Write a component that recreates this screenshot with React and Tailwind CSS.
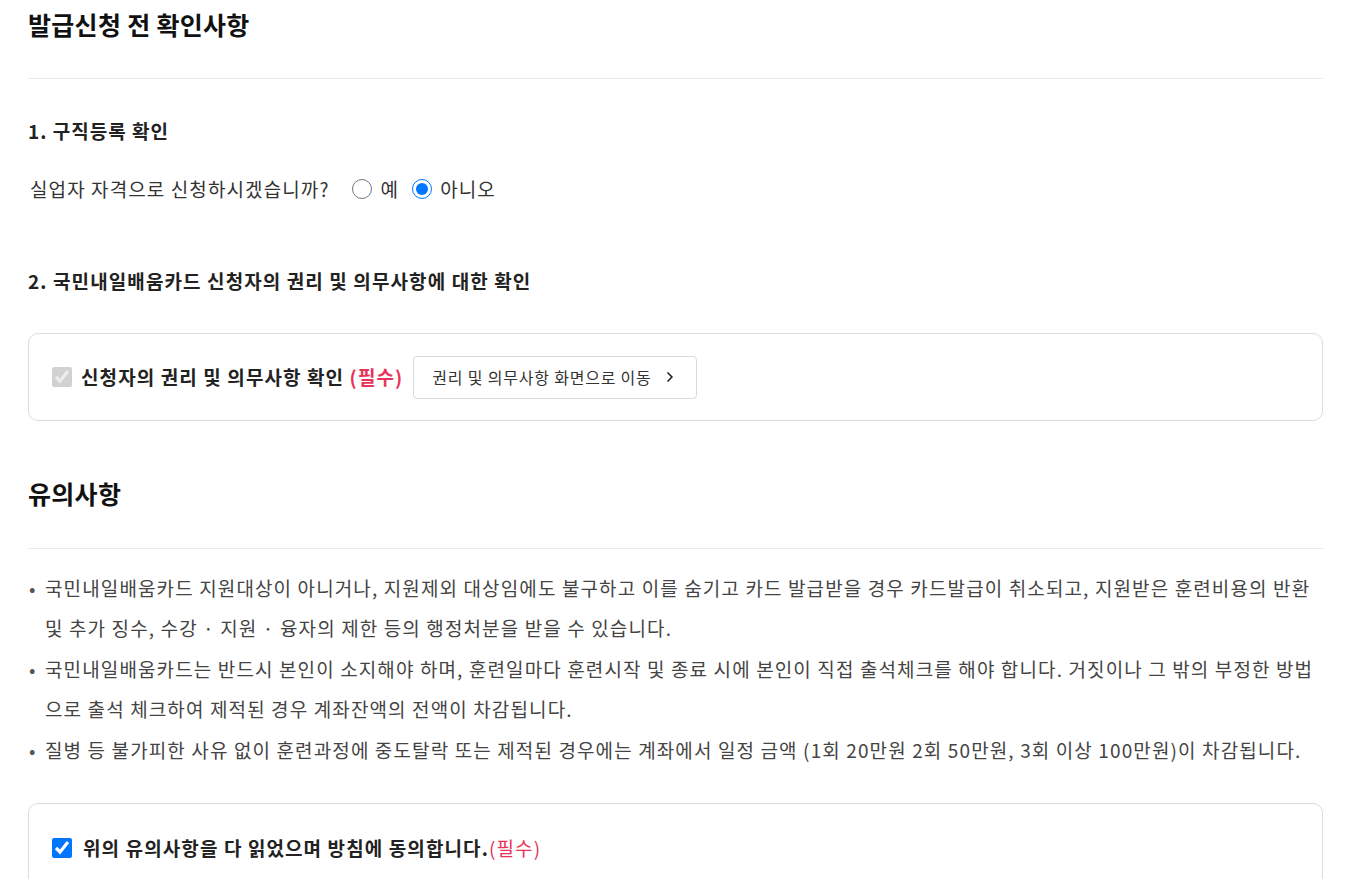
import React from "react";
import { ChevronRight } from "lucide-react";

const notices = [
  "국민내일배움카드 지원대상이 아니거나, 지원제외 대상임에도 불구하고 이를 숨기고 카드 발급받을 경우 카드발급이 취소되고, 지원받은 훈련비용의 반환 및 추가 징수, 수강 · 지원 · 융자의 제한 등의 행정처분을 받을 수 있습니다.",
  "국민내일배움카드는 반드시 본인이 소지해야 하며, 훈련일마다 훈련시작 및 종료 시에 본인이 직접 출석체크를 해야 합니다. 거짓이나 그 밖의 부정한 방법으로 출석 체크하여 제적된 경우 계좌잔액의 전액이 차감됩니다.",
  "질병 등 불가피한 사유 없이 훈련과정에 중도탈락 또는 제적된 경우에는 계좌에서 일정 금액 (1회 20만원 2회 50만원, 3회 이상 100만원)이 차감됩니다.",
];

const App = () => {
  return (
    <div
      className="min-h-screen bg-white text-[#333] pl-[28px] pr-[24px]"
      style={{ fontFamily: '"Noto Sans CJK KR", "Noto Sans", sans-serif' }}
    >
      <h1 className="text-[25px] tracking-[0.3px] leading-[48px] font-bold text-[#111]">
        발급신청 전 확인사항
      </h1>
      <div className="mt-[30px] border-t border-[#ebebeb]"></div>

      {/* 1. 구직등록 */}
      <h2 className="mt-[38px] text-[19px] tracking-[1px] leading-[28px] font-bold text-[#222]">
        1. 구직등록 확인
      </h2>
      <div className="mt-[30px] flex items-center text-[19px] tracking-[1.1px] leading-[28px] text-[#333]">
        <span className="ml-[2px]">실업자 자격으로 신청하시겠습니까?</span>
        <label className="ml-[22px] flex items-center">
          <input type="radio" name="unemp" readOnly className="w-[20px] h-[20px] m-0" />
          <span className="ml-[9px]">예</span>
        </label>
        <label className="ml-[13px] flex items-center">
          <input type="radio" name="unemp" checked readOnly className="w-[20px] h-[20px] m-0" />
          <span className="ml-[8px]">아니오</span>
        </label>
      </div>

      {/* 2. 권리 및 의무 */}
      <h2 className="mt-[64px] text-[19px] tracking-[1.1px] leading-[28px] font-bold text-[#222]">
        2. 국민내일배움카드 신청자의 권리 및 의무사항에 대한 확인
      </h2>
      <div className="mt-[38px] h-[88px] border border-[#dcdcdc] rounded-[10px] flex items-center px-[23px]">
        <input type="checkbox" checked disabled readOnly className="w-[20px] h-[20px] m-0" />
        <span className="ml-[9px] text-[19px] tracking-[1.1px] font-bold text-[#222]">
          신청자의 권리 및 의무사항 확인 <span className="text-[#e8345a]">(필수)</span>
        </span>
        <button className="ml-[10px] h-[43px] px-[18px] border border-[#d9d9d9] rounded-[4px] bg-white flex items-center text-[16px] tracking-[0.8px] text-[#333]">
          권리 및 의무사항 화면으로 이동
          <ChevronRight size={16} strokeWidth={2.5} className="ml-[10px] text-[#222]" />
        </button>
      </div>

      {/* 유의사항 */}
      <h1 className="mt-[52px] text-[25px] tracking-[0.3px] leading-[40px] font-bold text-[#111]">
        유의사항
      </h1>
      <div className="mt-[35px] border-t border-[#ebebeb]"></div>
      <ul className="mt-[19px] space-y-[1px]">
        {notices.map((t, i) => (
          <li key={i} className="flex text-[19px] tracking-[1.12px] leading-[40px] text-[#444]">
            <span className="w-[17px] shrink-0 pl-[1px] text-[#555]">•</span>
            <span>{t}</span>
          </li>
        ))}
      </ul>

      <div className="mt-[33px] h-[120px] border border-[#dcdcdc] rounded-[10px] px-[23px] pt-[30px]">
        <label className="flex items-center">
          <input type="checkbox" checked readOnly className="w-[20px] h-[20px] m-0" />
          <span className="ml-[11px] text-[19px] tracking-[1.1px] font-bold text-[#222]">
            위의 유의사항을 다 읽었으며 방침에 동의합니다.
            <span className="font-normal text-[#e8345a]">(필수)</span>
          </span>
        </label>
      </div>
    </div>
  );
};

export default App;
